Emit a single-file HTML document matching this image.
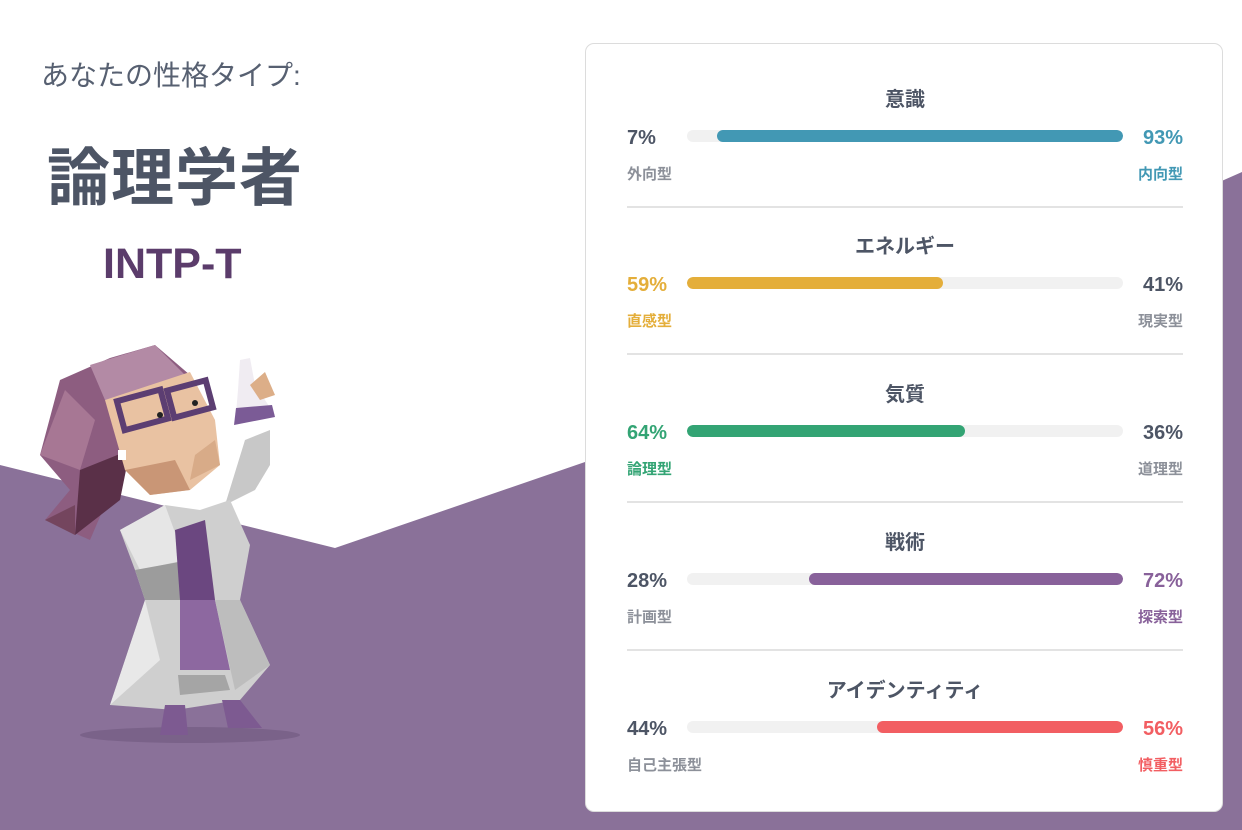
<!DOCTYPE html>
<html><head><meta charset="utf-8"><style>
body{margin:0;width:1242px;height:830px;position:relative;overflow:hidden;background:#fff;font-family:"Liberation Sans","Noto Sans CJK JP",sans-serif;}
.bg{position:absolute;left:0;top:0}
.sub{position:absolute;left:41px;top:54px;font-size:28px;color:#576071;}
.name{position:absolute;left:47px;top:128px;font-size:63px;font-weight:bold;color:#4d5565;letter-spacing:1px}
.code{position:absolute;left:103px;top:240px;font-size:43px;font-weight:bold;color:#5b3c6b;}
.card{position:absolute;left:585px;top:43px;width:636px;height:767px;background:#fff;border:1.5px solid #dcdcdc;border-radius:9px;}
.row{position:absolute;left:41px;width:556px;height:148px}
.t{position:absolute;top:40px;width:100%;text-align:center;font-size:20px;font-weight:bold;color:#4d5565}
.pl,.pr{position:absolute;top:84px;font-size:20px;font-weight:bold;color:#4d5565}
.pl{left:0}.pr{right:0}
.ll,.lr{position:absolute;top:120px;font-size:15px;font-weight:bold;color:#8c9099}
.ll{left:0}.lr{right:0}
.track{position:absolute;left:60px;top:87px;width:436px;height:12px;border-radius:6px;background:#f1f1f1;overflow:hidden}
.fill{position:absolute;top:0;height:12px;border-radius:6px}
.sep{position:absolute;left:0;right:0;top:163px;height:2px;background:#e3e3e3}
</style></head><body>
<svg class="bg" width="1242" height="830"><polygon points="0,465 335,548 585,462 1242,172 1242,830 0,830" fill="#8a7199"/></svg>
<div class="sub">あなたの性格タイプ:</div>
<div class="name">論理学者</div>
<div class="code">INTP-T</div>
<svg class="bg" width="330" height="830" viewBox="0 0 330 830">
<ellipse cx="190" cy="735" rx="110" ry="8" fill="#7a6289"/>
<polygon points="40,455 60,380 110,358 155,345 190,375 170,430 120,470 90,540 45,520 70,490" fill="#8d5d80"/>
<polygon points="90,365 155,345 190,380 105,400" fill="#b38aa5"/>
<polygon points="40,455 65,390 95,420 80,470" fill="#a77794"/>
<polygon points="80,470 130,450 120,500 75,535" fill="#5a3048"/>
<polygon points="45,520 75,505 75,535" fill="#74455e"/>
<polygon points="105,400 190,372 215,420 220,465 190,490 150,495 125,470" fill="#e9c2a2"/>
<polygon points="125,470 150,495 190,490 175,460" fill="#c99676"/>
<polygon points="190,480 220,465 215,440 195,455" fill="#d8ab88"/>
<rect x="120" y="395" width="45" height="30" fill="none" stroke="#5c3e72" stroke-width="6" transform="rotate(-15 142 410)"/>
<rect x="170" y="385" width="40" height="28" fill="none" stroke="#5c3e72" stroke-width="6" transform="rotate(-15 190 399)"/>
<circle cx="160" cy="415" r="3" fill="#222"/><circle cx="195" cy="403" r="3" fill="#222"/>
<rect x="118" y="450" width="8" height="10" fill="#fff"/>
<polygon points="225,505 245,440 270,430 270,465 255,490" fill="#c8c8c8"/>
<polygon points="240,360 250,358 255,385 275,415 235,425 238,390" fill="#f0ecf2"/>
<polygon points="236,408 272,405 275,417 234,425" fill="#7b5b96"/>
<polygon points="250,385 265,372 275,395 260,400" fill="#dcae88"/>
<polygon points="120,530 165,505 200,510 230,500 250,545 240,600 270,665 240,700 175,710 110,705 145,600 135,570" fill="#cfcfcf"/>
<polygon points="120,530 165,505 185,560 140,570" fill="#e6e6e6"/>
<polygon points="135,570 190,560 215,600 145,600" fill="#9c9c9c"/>
<polygon points="175,530 205,520 215,600 180,600" fill="#6b4780"/>
<polygon points="180,600 215,600 230,670 180,670" fill="#8d68a0"/>
<polygon points="110,705 145,600 160,660" fill="#e8e8e8"/>
<polygon points="215,600 240,600 270,665 235,690" fill="#bdbdbd"/>
<polygon points="178,675 225,675 230,690 180,695" fill="#a5a5a5"/>
<polygon points="165,705 185,705 188,735 160,735" fill="#7d5a91"/>
<polygon points="222,700 240,700 262,728 228,728" fill="#7d5a91"/>
</svg>
<div class="card">
 <div class="row" style="top:-1px"><div class="t">意識</div><div class="pl">7%</div><div class="pr" style="color:#4298b4">93%</div>
  <div class="track"><div class="fill" style="left:30px;right:0;background:#4298b4"></div></div>
  <div class="ll">外向型</div><div class="lr" style="color:#4298b4">内向型</div><div class="sep"></div></div>
 <div class="row" style="top:146px"><div class="t">エネルギー</div><div class="pl" style="color:#e4ae3a">59%</div><div class="pr">41%</div>
  <div class="track"><div class="fill" style="left:0;width:256px;background:#e4ae3a"></div></div>
  <div class="ll" style="color:#e4ae3a">直感型</div><div class="lr">現実型</div><div class="sep"></div></div>
 <div class="row" style="top:294px"><div class="t">気質</div><div class="pl" style="color:#33a474">64%</div><div class="pr">36%</div>
  <div class="track"><div class="fill" style="left:0;width:278px;background:#33a474"></div></div>
  <div class="ll" style="color:#33a474">論理型</div><div class="lr">道理型</div><div class="sep"></div></div>
 <div class="row" style="top:442px"><div class="t">戦術</div><div class="pl">28%</div><div class="pr" style="color:#88619a">72%</div>
  <div class="track"><div class="fill" style="left:122px;right:0;background:#88619a"></div></div>
  <div class="ll">計画型</div><div class="lr" style="color:#88619a">探索型</div><div class="sep"></div></div>
 <div class="row" style="top:590px"><div class="t">アイデンティティ</div><div class="pl">44%</div><div class="pr" style="color:#f25e62">56%</div>
  <div class="track"><div class="fill" style="left:190px;right:0;background:#f25e62"></div></div>
  <div class="ll">自己主張型</div><div class="lr" style="color:#f25e62">慎重型</div></div>
</div>
</body></html>
